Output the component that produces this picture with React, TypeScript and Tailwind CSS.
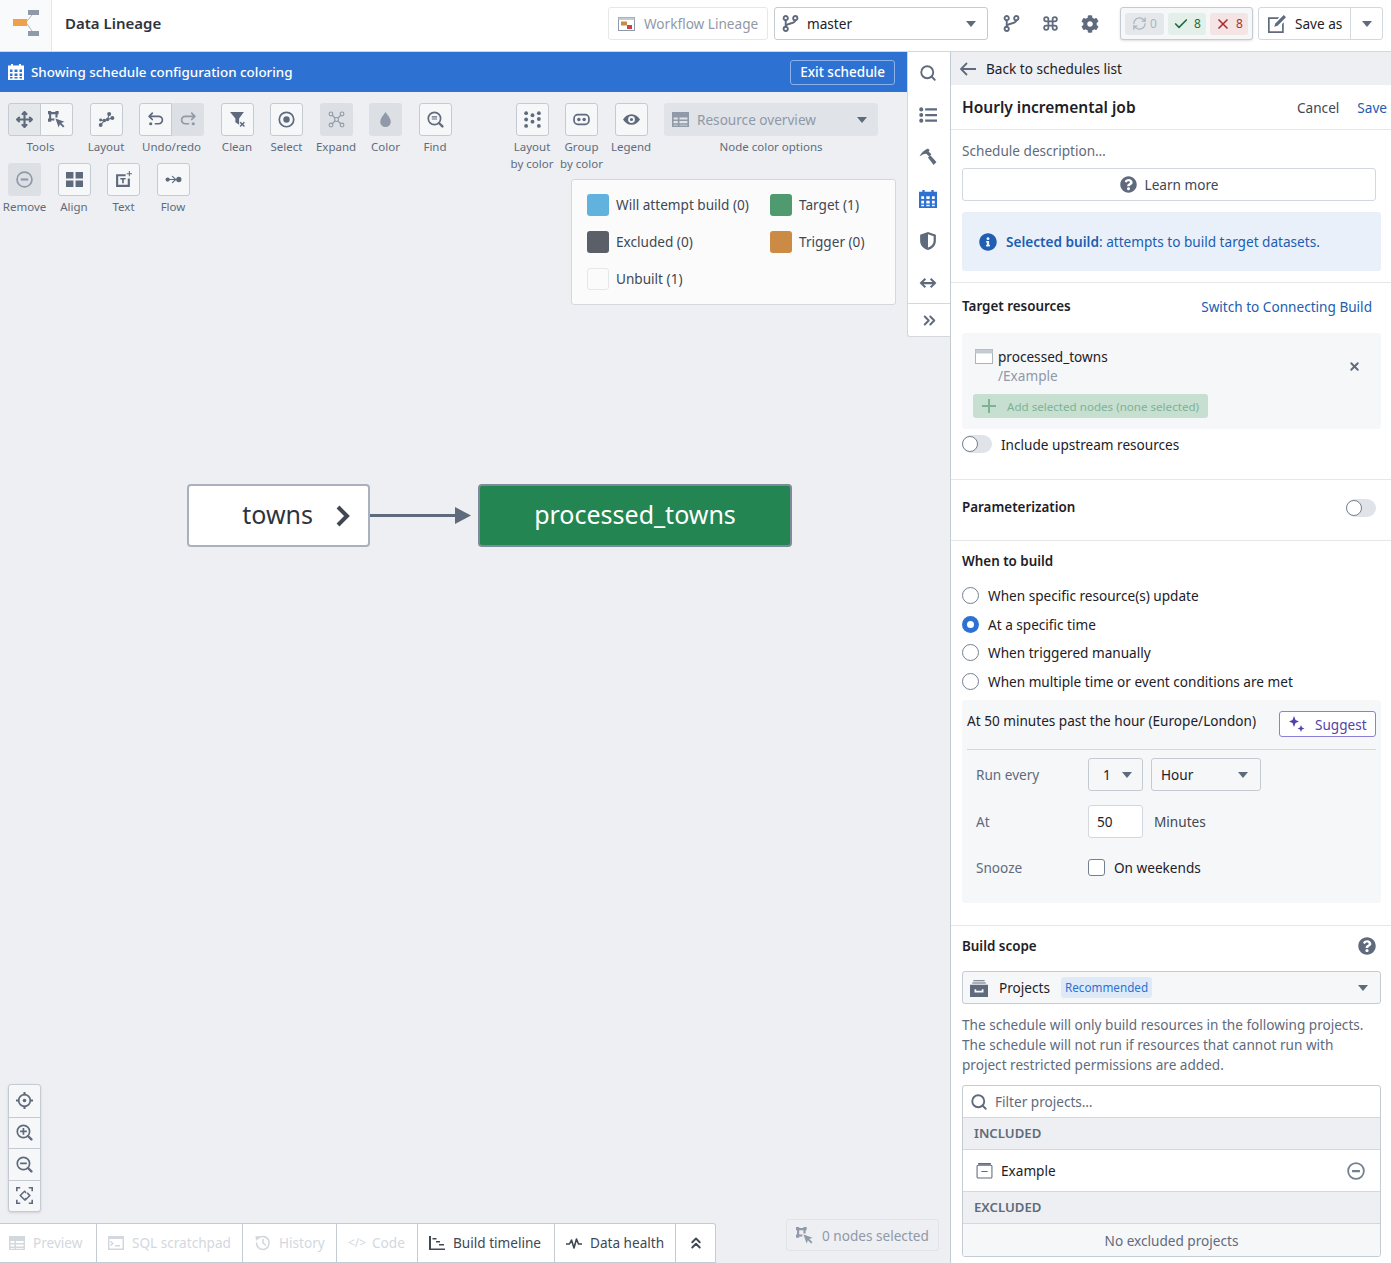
import type { ReactNode } from "react";
import { Check, ChevronsRight, ChevronsUp, Command, RefreshCw, Search, X } from "lucide-react";
import { FaCog, FaInfoCircle, FaQuestionCircle } from "react-icons/fa";

const Glyph = ({ size = 16, className = "", children }: { size?: number; className?: string; children: ReactNode }) => (
  <svg width={size} height={size} viewBox="0 0 16 16" fill="currentColor" className={"shrink-0 " + className}>
    {children}
  </svg>
);

const line = { fill: "none", stroke: "currentColor", strokeWidth: 1.6, strokeLinecap: "round", strokeLinejoin: "round" } as const;

const icons: Record<string, ReactNode> = {
  move: <path d="M15.7 7.3l-2-2a1 1 0 00-1.4 1.4l.3.3H9V3.4l.3.3a1 1 0 001.4-1.4l-2-2a1 1 0 00-1.4 0l-2 2a1 1 0 001.4 1.4l.3-.3V7H3.4l.3-.3a1 1 0 00-1.4-1.4l-2 2a1 1 0 000 1.4l2 2a1 1 0 001.4-1.4L3.4 9H7v3.6l-.3-.3a1 1 0 00-1.4 1.4l2 2a1 1 0 001.4 0l2-2a1 1 0 00-1.4-1.4l-.3.3V9h3.6l-.3.3a1 1 0 001.4 1.4l2-2a1 1 0 000-1.4z" />,
  select: <><path d="M0 0h3v1h4V0h3v3H9v3H7V3H3v4h3v2H3v1H0V7h1V3H0z" /><path d="M7 7l8.500 3-3 1.300 3 3-1.300 1.200-3-3L10 15.500z" /></>,
  layout: <><g {...line} strokeWidth={1}><path d="M2.500 13L6 9l3-1 4-1.500M9 8L10.500 3M2.500 8.500L6 9" /></g><circle cx="2.500" cy="13.200" r="1.800" /><circle cx="2.500" cy="8.500" r="1.400" /><circle cx="6" cy="9" r="1.700" /><circle cx="10.500" cy="2.800" r="1.900" /><circle cx="13.500" cy="6.500" r="1.900" /><circle cx="9" cy="8" r="1.600" /></>,
  undo: <><path {...line} d="M5 2L2 5l3 3M2.500 5H11a3.500 3.500 0 010 7H8" /><circle cx="3.500" cy="12" r="1.500" /></>,
  redo: <><path {...line} d="M11 2l3 3-3 3M13.500 5H5a3.500 3.500 0 000 7h3" /><circle cx="12.500" cy="12" r="1.500" /></>,
  clean: <><path d="M1 1h13L9.500 7v6L6 10.500V7z" /><path d="M11 10l1.500 1.500L14 10l1 1-1.500 1.500L15 14l-1 1-1.500-1.500L11 15l-1-1 1.500-1.500L10 11z" /></>,
  target: <><circle cx="8" cy="8" r="6.800" {...line} /><circle cx="8" cy="8" r="3" /></>,
  expand: <><g {...line} strokeWidth={1}><path d="M4 4l8 8M12 4l-8 8" /><circle cx="8" cy="8" r="1.800" fill="#dce0e5" /><circle cx="2.800" cy="2.800" r="1.800" /><circle cx="13.200" cy="2.800" r="1.800" /><circle cx="2.800" cy="13.200" r="1.800" /><circle cx="13.200" cy="13.200" r="1.800" /></g></>,
  drop: <path d="M8 1c2 3 5 6 5 9a5 5 0 01-10 0c0-3 3-6 5-9z" />,
  find: <><circle cx="7" cy="7" r="5.800" {...line} /><path {...line} d="M11.500 11.500l3 3" strokeWidth={2.200} /><path d="M4.500 5h5v1h-5zM4.500 7h5v1h-5z" /></>,
  minusCircle: <><circle cx="8" cy="8" r="7" {...line} /><path d="M4.500 7h7v2h-7z" /></>,
  align: <path d="M0 1h7v6H0zM9 1h7v6H9zM0 9h7v6H0zM9 9h7v6H9z" />,
  text: <><path d="M1 3h9v2H3v8h9V7h2v8H1z" /><path d="M5 6.500h5V8H8.300v3.500H6.700V8H5zM13 0h1v2h2v1h-2v2h-1V3h-2V2h2z" /></>,
  flow: <><circle cx="2.500" cy="8" r="2" /><circle cx="13" cy="8" r="2.500" /><path {...line} strokeWidth={1} d="M3 8h9M7 5l3 3-3 3" /></>,
  dots: <><circle cx="2" cy="2" r="1.800" /><circle cx="2" cy="8" r="1.800" /><circle cx="2" cy="14" r="1.800" /><circle cx="8" cy="4" r="1.800" /><circle cx="8" cy="10" r="1.800" /><circle cx="14" cy="2" r="1.800" /><circle cx="14" cy="7.500" r="1.800" /><circle cx="14" cy="14" r="1.800" /></>,
  group: <><rect x="1" y="3.500" width="14" height="9" rx="3.500" {...line} /><circle cx="5.500" cy="8" r="1.600" /><circle cx="10.500" cy="8" r="1.600" /></>,
  eye: <path fillRule="evenodd" d="M8 3c3.500 0 6.300 2.200 8 5-1.700 2.800-4.500 5-8 5s-6.300-2.200-8-5c1.700-2.800 4.500-5 8-5zm0 1.800a3.200 3.200 0 100 6.400 3.200 3.200 0 000-6.400zM8 6.500a1.500 1.500 0 110 3 1.500 1.500 0 010-3z" />,
  table: <path fillRule="evenodd" d="M0 1h16v14H0zm1.500 5v2h4V6zm5.500 0v2h7.500V6zM1.500 9.500v2h4v-2zm5.500 0v2h7.500v-2zm-5.500 3.500v.7h4V13zm5.500 0v.7h7.500V13z" />,
  edit: <><path d="M0 2h10L8.500 3.500H1.500v11h11V8L14 6.500V16H0z" /><path d="M14 0l2 2-7.500 7.500-3 1 1-3z" /></>,
  hammer: <><path d="M.5 7.500C2 4 5 1.500 8 .5L9.500 2l-1 1 2.500 2.500-2 2L6.500 5C4 5 2.500 6 .5 7.500z" /><path d="M8 8.500l2-2 5.500 6-2.500 2.500z" /></>,
  calendar: <path fillRule="evenodd" d="M3 0h2v1.500h6V0h2v1.500h3V16H0V1.500h3zM2 5.500V8h2.500V5.500zm4.500 0V8h3V5.500zm5 0V8H14V5.500zM2 9.500V12h2.500V9.500zm4.500 0V12h3V9.500zm5 0V12H14V9.500zM2 13v1.500h2.500V13zm4.500 0v1.500h3V13zm5 0v1.500H14V13z" />,
  shield: <path fillRule="evenodd" d="M8 0l7 2.500V8c0 4-3 6.800-7 8-4-1.200-7-4-7-8V2.500zm0 2v11.800c3-1.100 5-3.200 5-5.800V3.800z" />,
  arrows: <path d="M5 3.500L.5 8 5 12.500l1.300-1.300L4 9h8l-2.300 2.200 1.300 1.300L15.500 8 11 3.500 9.700 4.800 12 7H4l2.300-2.200z" />,
  list: <><circle cx="2" cy="3" r="1.800" /><circle cx="2" cy="8" r="1.800" /><circle cx="2" cy="13" r="1.800" /><path d="M5.500 2h10.500v2H5.500zM5.500 7h10.500v2H5.500zM5.500 12h10.500v2H5.500z" /></>,
  locate: <><circle cx="8" cy="8" r="5.500" {...line} /><circle cx="8" cy="8" r="1.700" /><path d="M7 0h2v3H7zM7 13h2v3H7zM0 7h3v2H0zM13 7h3v2h-3z" /></>,
  zoomIn: <><circle cx="7" cy="7" r="5.800" {...line} /><path {...line} d="M11.500 11.500l3 3" strokeWidth={2.200} /><path d="M6.200 3.800h1.600v2.400h2.400v1.600H7.800v2.400H6.200V7.800H3.800V6.200h2.400z" /></>,
  zoomOut: <><circle cx="7" cy="7" r="5.800" {...line} /><path {...line} d="M11.500 11.500l3 3" strokeWidth={2.200} /><path d="M3.800 6.200h6.400v1.600H3.800z" /></>,
  fit: <path d="M0 0h4v1.500H1.500V4H0zM12 0h4v4h-1.500V1.500H12zM0 12h1.500v2.500H4V16H0zM14.500 12H16v4h-4v-1.500h2.500zM8 3l2 2-1 1-1-1-3 3 3 3 1-1 1 1-2 2-5-5zM11 5l3 3-5 5-1-1 4-4-2-2z" />,
  timeline: <path d="M0 1h2v12.500h14V15H0zM3.500 3h4v1.500h-4zM7 6h4v1.500H7zM10 9h5v1.500h-5z" />,
  pulse: <path {...line} d="M.5 9h3l2-4 2.500 8 2.500-9 2 5h3" />,
  history: <><path {...line} d="M3 3.500A6.500 6.500 0 118 14.500 6.500 6.500 0 011.500 8" /><path d="M.5 1l5 .5L1 6z" /><path {...line} d="M8 4.500V8l2.500 2" /></>,
  sql: <path fillRule="evenodd" d="M0 1h16v14H0zm1.500 3v9.500h13V4zM3 6l3 2.500L3 11l-1-1 2-1.500L2 7zM7 10h5v1.500H7z" />,
  project: <><path d="M3 1h10v1H3zM2 3h12v1H2z" /><path fillRule="evenodd" d="M0 5h16v11H0zm4 4v3h8V9h-1.500v1.500h-5V9z" /></>,
  projectOutline: <><path d="M2 1h12v1.500H2z" /><rect x="1" y="3" width="14" height="12" rx="1" {...line} strokeWidth={1} /><path d="M5 8.500h6v1H5z" /></>,
  branch: <><g {...line} strokeWidth={1.800}><circle cx="3.500" cy="3" r="2" /><circle cx="12.500" cy="3" r="2" /><circle cx="3.500" cy="13" r="2" /><path d="M3.500 5v6M12.500 5c0 4-9 2-9 6" /></g></>,
};

const Icon = ({ name, size = 16, className = "" }: { name: string; size?: number; className?: string }) => (
  <Glyph size={size} className={className}>{icons[name]}</Glyph>
);

const Caret = ({ className = "" }: { className?: string }) => (
  <svg width="10" height="6" viewBox="0 0 10 6" fill="currentColor" className={"shrink-0 text-[#5f6b7c] " + className}>
    <path d="M0 0h10L5 6z" />
  </svg>
);

const ToolButton = ({ icon, off, active, className = "w-[33px]" }: { icon: string; off?: boolean; active?: boolean; className?: string }) => (
  <div
    className={
      "flex h-[33px] items-center justify-center rounded-[3px] " +
      (off
        ? "bg-[#dce0e5] text-[#8f99a8] "
        : active
          ? "border border-[#c5cbd3] bg-[#e5e8eb] text-[#5f6b7c] "
          : "border border-[#c5cbd3] bg-[#f6f7f9] text-[#5f6b7c] ") +
      className
    }
  >
    <Icon name={icon} size={17} />
  </div>
);

const ToolLabel = ({ children }: { children: ReactNode }) => (
  <div className="mt-[2px] whitespace-nowrap text-center text-[11.5px] leading-[17px] text-[#5f6b7c]">{children}</div>
);

const Tool = ({ icon, label, off }: { icon: string; label: ReactNode; off?: boolean }) => (
  <div className="flex w-[33px] flex-col items-center">
    <ToolButton icon={icon} off={off} />
    <ToolLabel>{label}</ToolLabel>
  </div>
);

const Toolbar = () => (
  <div className="absolute left-[8px] right-[29px] top-[11px] flex justify-between">
    <div className="flex w-[460px] flex-wrap gap-x-[16.5px] gap-y-[8px]">
      <div className="flex flex-col items-center">
        <div className="flex">
          <ToolButton icon="move" active className="w-[33px] rounded-r-none" />
          <ToolButton icon="select" className="w-[32px] rounded-l-none border-l-0" />
        </div>
        <ToolLabel>Tools</ToolLabel>
      </div>
      <Tool icon="layout" label="Layout" />
      <div className="flex flex-col items-center">
        <div className="flex">
          <ToolButton icon="undo" className="w-[33px] rounded-r-none" />
          <ToolButton icon="redo" off className="w-[32px] rounded-l-none" />
        </div>
        <ToolLabel>Undo/redo</ToolLabel>
      </div>
      <Tool icon="clean" label="Clean" />
      <Tool icon="target" label="Select" />
      <Tool icon="expand" label="Expand" off />
      <Tool icon="drop" label="Color" off />
      <Tool icon="find" label="Find" />
      <Tool icon="minusCircle" label="Remove" off />
      <Tool icon="align" label="Align" />
      <Tool icon="text" label="Text" />
      <Tool icon="flow" label="Flow" />
    </div>
    <div className="flex gap-x-[16.5px]">
      <Tool icon="dots" label={<>Layout<br />by color</>} />
      <Tool icon="group" label={<>Group<br />by color</>} />
      <Tool icon="eye" label="Legend" />
      <div className="flex w-[214px] flex-col items-center">
        <div className="flex h-[33px] w-full items-center rounded-[3px] bg-[#e0e3e8] pl-[8px] pr-[11px] text-[13.6px] text-[#8f99a8]">
          <Icon name="table" size={17} className="mr-[8px]" />
          <span className="flex-1">Resource overview</span>
          <Caret />
        </div>
        <ToolLabel>Node color options</ToolLabel>
      </div>
    </div>
  </div>
);

const Swatch = ({ color, label }: { color: string; label: string }) => (
  <div className="flex h-[22px] items-center gap-[7px] text-[13.6px] text-[#404854]">
    <span className={"h-[22px] w-[22px] rounded-[3px] " + color} />
    <span className="mb-[1px]">{label}</span>
  </div>
);

const Legend = () => (
  <div className="absolute left-[571px] top-[87px] grid h-[126px] w-[325px] grid-cols-[183px_1fr] content-start gap-y-[15px] rounded-[3px] border border-[#d3d8de] bg-[#fbfbfc] pl-[15px] pt-[14px]">
    <Swatch color="bg-[#62b2de]" label="Will attempt build (0)" />
    <Swatch color="bg-[#4f9b6f]" label="Target (1)" />
    <Swatch color="bg-[#5a5f68]" label="Excluded (0)" />
    <Swatch color="bg-[#cc8b45]" label="Trigger (0)" />
    <Swatch color="border border-[#e5e8eb] bg-[#fbfbfc]" label="Unbuilt (1)" />
  </div>
);

const Graph = () => (
  <>
    <div className="absolute left-[187px] top-[392px] flex h-[63px] w-[183px] items-center justify-end rounded-[4px] border-2 border-[#a9b1be] bg-white pb-[3px] pr-[17px] text-[25px] leading-[38px] text-[#2f343c]">
      towns
      <svg width="16" height="22" viewBox="0 0 16 22" className="ml-[22px] mt-[3px]" fill="none" stroke="#404854" strokeWidth="4">
        <path d="M3 2l9 9-9 9" />
      </svg>
    </div>
    <div className="absolute left-[370px] top-[415px] flex items-center text-[#5f6b7c]">
      <div className="h-[3px] w-[85px] bg-[#5f6b7c]" />
      <svg width="16" height="17" viewBox="0 0 16 17" fill="currentColor"><path d="M0 0l16 8.500L0 17z" /></svg>
    </div>
    <div className="absolute left-[478px] top-[392px] flex h-[63px] w-[314px] items-center justify-center rounded-[4px] border-2 border-[#7d8a99] bg-[#238551] pb-[3px] text-[25px] leading-[38px] text-white">
      processed_towns
    </div>
  </>
);

const ZoomControls = () => (
  <div className="absolute left-[8px] top-[992px] flex w-[33px] flex-col overflow-hidden rounded-[3px] border border-[#c5cbd3] bg-[#f6f7f9] text-[#5f6b7c] shadow-sm">
    {["locate", "zoomIn", "zoomOut", "fit"].map((name, i) => (
      <div key={name} className={"flex h-[31.5px] items-center justify-center " + (i ? "border-t border-[#c5cbd3]" : "")}>
        <Icon name={name} size={17} />
      </div>
    ))}
  </div>
);

const Tab = ({ icon, label, off, width }: { icon: ReactNode; label: string; off?: boolean; width: string }) => (
  <div className={"flex h-full items-center gap-[8px] whitespace-nowrap border-r border-[#c5cbd3] pb-[1px] text-[13.6px] " + width + (off ? " text-[#d3d8de]" : " text-[#404854]")}>
    {icon}
    {label}
  </div>
);

const BottomTabs = () => (
  <div className="absolute bottom-0 left-0 flex h-[40px] w-[716px] rounded-tr-[3px] border-y border-r border-[#c5cbd3] bg-white">
    <Tab icon={<Icon name="table" />} label="Preview" off width="w-[97px] pl-[9px]" />
    <Tab icon={<Icon name="sql" />} label="SQL scratchpad" off width="w-[146px] pl-[11px]" />
    <Tab icon={<Icon name="history" />} label="History" off width="w-[94px] pl-[12px]" />
    <Tab icon={<span className="w-[16px] text-[12px]">&lt;/&gt;</span>} label="Code" off width="w-[81px] pl-[11px]" />
    <Tab icon={<Icon name="timeline" />} label="Build timeline" width="w-[137px] pl-[11px]" />
    <Tab icon={<Icon name="pulse" />} label="Data health" width="w-[121px] pl-[11px]" />
    <div className="flex flex-1 items-center justify-center text-[#404854]">
      <ChevronsUp size={18} strokeWidth={2.500} />
    </div>
  </div>
);

const TopBar = () => (
  <header className="flex h-[52px] shrink-0 items-start border-b border-[#d3d8de] bg-white">
    <div className="flex h-[51px] w-[52px] items-center justify-center border-r border-[#e5e8eb] bg-[#f9fafb] pb-[5px]">
      <svg width="26" height="26" viewBox="0 0 26 26">
        <path d="M14 11L19 5M14 14l5 7" stroke="#abb3bf" fill="none" />
        <rect x="0" y="9" width="14" height="7" fill="#f0a04b" />
        <rect x="15" y="0" width="11" height="5" fill="#8f99a8" />
        <rect x="15" y="21" width="11" height="5" fill="#8f99a8" />
      </svg>
    </div>
    <div className="flex h-[47px] flex-1 items-center">
      <div className="mb-[1px] ml-[13px] flex-1 text-[15px] font-semibold text-[#2f343c]">Data Lineage</div>
      <div className="flex h-[33px] w-[160px] items-center rounded-[3px] border border-[#e5e8eb] pl-[9px] text-[13.6px] text-[#8f99a8]">
        <svg width="17" height="14" viewBox="0 0 17 14" className="mr-[9px]">
          <rect x=".5" y=".5" width="16" height="13" fill="#fff" stroke="#8f99a8" />
          <rect x=".5" y=".5" width="16" height="2.500" fill="#c5cbd3" />
          <rect x="3" y="4.500" width="6" height="4" fill="#cc8b45" />
          <rect x="9" y="8" width="5" height="4" fill="#cd4246" />
        </svg>
        Workflow Lineage
      </div>
      <div className="ml-[6px] flex h-[33px] w-[214px] items-center rounded-[3px] border border-[#c5cbd3] bg-white pl-[7px] pr-[11px] text-[13.6px] text-[#1c2127]">
        <Icon name="branch" size={17} className="mr-[8px] text-[#5f6b7c]" />
        <span className="flex-1">master</span>
        <Caret />
      </div>
      <div className="ml-[15px] flex w-[100px] items-center gap-[22px] text-[#5f6b7c]">
        <Icon name="branch" size={17} />
        <Command size={17} strokeWidth={2.500} />
        <FaCog size={18} />
      </div>
      <div className="ml-[17px] flex h-[33px] w-[133px] items-center gap-[4px] rounded-[3px] border border-[#c5cbd3] bg-[#f6f7f9] px-[4px] text-[12px] shadow-sm">
        <span className="flex h-[22px] w-[39px] items-center justify-center gap-[3px] rounded-[3px] bg-[#e5e8eb] text-[#abb3bf]">
          <RefreshCw size={15} strokeWidth={2} />0
        </span>
        <span className="flex h-[22px] w-[38px] items-center justify-center gap-[5px] rounded-[3px] bg-[#e3efe8] text-[#1c6e42]">
          <Check size={16} strokeWidth={2.500} />8
        </span>
        <span className="flex h-[22px] w-[38px] items-center justify-center gap-[5px] rounded-[3px] bg-[#f5e4e4] text-[#ac2f33]">
          <X size={16} strokeWidth={2.500} />8
        </span>
      </div>
      <div className="ml-[5px] mr-[8px] flex h-[33px] w-[125px] items-center rounded-[3px] border border-[#d3d8de] text-[13.6px] text-[#1c2127]">
        <Icon name="edit" size={18} className="ml-[9px] mr-[9px] text-[#5f6b7c]" />
        <span className="flex-1">Save as</span>
        <div className="flex h-full w-[32px] items-center justify-center border-l border-[#d3d8de]"><Caret /></div>
      </div>
    </div>
  </header>
);

const SideRail = () => (
  <div className="flex h-[285px] w-[43px] shrink-0 flex-col rounded-bl-[3px] border-b border-l border-[#d3d8de] bg-white pr-[2px] text-[#5f6b7c]">
    <div className="flex h-[251px] flex-col items-center gap-[24px] pt-[12px]">
      <Search size={18} strokeWidth={2.500} />
      <Icon name="list" size={18} />
      <Icon name="hammer" size={18} />
      <Icon name="calendar" size={18} className="text-[#2d72d2]" />
      <Icon name="shield" size={18} />
      <Icon name="arrows" size={18} />
    </div>
    <div className="-mr-[2px] flex flex-1 items-center justify-center border-t border-[#d3d8de]">
      <ChevronsRight size={19} strokeWidth={2.500} />
    </div>
  </div>
);

const Canvas = () => (
  <div className="relative flex h-full w-[951px] shrink-0 border-r border-[#c5cbd3] bg-[#edeff2]">
    <div className="flex w-[907px] shrink-0 flex-col">
      <div className="flex h-[40px] items-center bg-[#2d72d2] pl-[8px] pr-[12px] text-white">
        <Icon name="calendar" />
        <span className="ml-[7px] flex-1 text-[13.4px] font-medium">Showing schedule configuration coloring</span>
        <div className="flex h-[25px] items-center rounded-[3px] border border-[#8ab1e8] px-[9px] text-[13.5px] font-medium">Exit schedule</div>
      </div>
      <div className="relative flex-1">
        <Toolbar />
        <Legend />
        <Graph />
        <ZoomControls />
        <BottomTabs />
      </div>
    </div>
    <SideRail />
    <div className="absolute bottom-[12px] left-[786px] flex h-[32px] w-[153px] items-center rounded-[3px] border border-[#e0e3e8] pl-[9px] text-[13.6px] text-[#8f99a8]">
      <Icon name="select" size={17} className="mr-[9px]" />
      0 nodes selected
    </div>
  </div>
);

const Toggle = () => (
  <span className="flex h-[18px] w-[30px] shrink-0 items-center rounded-full bg-[#e0e3e8]">
    <span className="h-[16px] w-[16px] rounded-full border border-[#738091] bg-white" />
  </span>
);

const Radio = ({ label, on }: { label: string; on?: boolean }) => (
  <div className="flex h-[17px] items-center gap-[9px] text-[13.6px] text-[#1c2127]">
    {on ? (
      <span className="flex h-[17px] w-[17px] items-center justify-center rounded-full bg-[#2d72d2]">
        <span className="h-[7px] w-[7px] rounded-full bg-white" />
      </span>
    ) : (
      <span className="h-[17px] w-[17px] rounded-full border border-[#738091] bg-white" />
    )}
    {label}
  </div>
);

const FormRow = ({ label, children, height }: { label: string; children: ReactNode; height: string }) => (
  <div className={"flex items-center " + height}>
    <span className="w-[121px] pl-[9px] text-[#5f6b7c]">{label}</span>
    {children}
  </div>
);

const SchedulePanel = () => (
  <aside className="flex h-full min-w-0 flex-1 flex-col overflow-hidden bg-white text-[13.6px] text-[#1c2127]">
    <div className="flex h-[33px] shrink-0 items-center bg-[#edeff2] pl-[9px]">
      <svg width="16" height="14" viewBox="0 0 16 14" fill="none" stroke="#5f6b7c" strokeWidth="1.800" className="mr-[10px]">
        <path d="M7 1L1 7l6 6M1 7h15" />
      </svg>
      Back to schedules list
    </div>
    <div className="flex h-[45px] shrink-0 items-center border-b border-[#e5e8eb] pl-[11px] pr-[4px]">
      <span className="flex-1 text-[15.5px] font-semibold">Hourly incremental job</span>
      <span className="mr-[18px] text-[#404854]">Cancel</span>
      <span className="text-[#215db0]">Save</span>
    </div>
    <div className="shrink-0 border-b border-[#e5e8eb] pb-[11px] pl-[11px] pr-[10px] pt-[10px]">
      <div className="h-[20px] text-[#5f6b7c]">Schedule description…</div>
      <div className="mr-[5px] mt-[8px] flex h-[33px] items-center justify-center gap-[8px] rounded-[3px] border border-[#d3d8de] text-[#404854]">
        <FaQuestionCircle size={17} className="text-[#5f6b7c]" />
        Learn more
      </div>
      <div className="mt-[11px] flex h-[59px] items-center gap-[9px] rounded-[3px] bg-[#e9f0fa] pl-[17px] text-[#215db0]">
        <FaInfoCircle size={18} />
        <span><b className="font-semibold">Selected build</b>: attempts to build target datasets.</span>
      </div>
    </div>
    <div className="h-[197px] shrink-0 border-b border-[#e5e8eb] pl-[11px] pr-[10px] pt-[13px]">
      <div className="flex h-[20px] items-center justify-between pr-[9px]">
        <span className="text-[13.4px] font-semibold">Target resources</span>
        <span className="text-[#215db0]">Switch to Connecting Build</span>
      </div>
      <div className="mt-[17px] h-[96px] rounded-[3px] bg-[#f6f7f9] pl-[13px] pr-[11px] pt-[14px]">
        <div className="flex items-start">
          <svg width="18" height="15" viewBox="0 0 18 15" className="mr-[5px] mt-[2px]">
            <rect x=".5" y=".5" width="17" height="14" fill="#fff" stroke="#abb3bf" />
            <rect x=".5" y=".5" width="17" height="4" fill="#c5cbd3" />
          </svg>
          <div className="flex-1 leading-[19px]">
            processed_towns
            <div className="text-[#8f99a8]">/Example</div>
          </div>
          <X size={13} strokeWidth={3.500} className="mr-[9px] mt-[13px] text-[#5f6b7c]" />
        </div>
        <div className="-ml-[2px] mt-[9px] flex h-[24px] w-[235px] items-center rounded-[3px] bg-[#c6dfd0] pl-[9px] text-[11.6px] text-[#7fb295]">
          <svg width="14" height="14" viewBox="0 0 14 14" fill="currentColor" className="mr-[11px]"><path d="M6 0h2v6h6v2H8v6H6V8H0V6h6z" /></svg>
          Add selected nodes (none selected)
        </div>
      </div>
      <div className="mt-[6px] flex h-[18px] items-center gap-[9px]">
        <Toggle />
        Include upstream resources
      </div>
    </div>
    <div className="flex h-[61px] shrink-0 items-center justify-between border-b border-[#e5e8eb] pb-[5px] pl-[11px] pr-[15px]">
      <span className="text-[13.4px] font-semibold">Parameterization</span>
      <Toggle />
    </div>
    <div className="h-[385px] shrink-0 border-b border-[#e5e8eb] pl-[11px] pr-[10px] pt-[10px]">
      <div className="h-[20px] text-[13.4px] font-semibold">When to build</div>
      <div className="mt-[16px] flex flex-col gap-[11.7px]">
        <Radio label="When specific resource(s) update" />
        <Radio label="At a specific time" on />
        <Radio label="When triggered manually" />
        <Radio label="When multiple time or event conditions are met" />
      </div>
      <div className="mt-[10px] h-[203px] rounded-[3px] bg-[#f6f7f9] px-[5px] pt-[11px]">
        <div className="flex h-[39px] items-start justify-between border-b border-[#d3d8de]">
          <span className="leading-[20px]">At 50 minutes past the hour (Europe/London)</span>
          <div className="flex h-[26px] w-[97px] items-center rounded-[3px] border border-[#8e7fd6] bg-white pl-[8px] text-[#5642a6]">
            <svg width="18" height="18" viewBox="0 0 18 18" fill="#5642a6" className="mr-[9px]">
              <path d="M6 1l1.500 4L11 6.500 7.500 8 6 12 4.500 8 1 6.500 4.500 5zM13 10l1 2.500 2.500 1-2.500 1L13 17l-1-2.500-2.500-1 2.500-1z" />
            </svg>
            Suggest
          </div>
        </div>
        <div className="mt-[8px] flex flex-col">
          <FormRow label="Run every" height="h-[33px]">
            <div className="flex h-[33px] w-[55px] items-center justify-between rounded-[3px] border border-[#c5cbd3] bg-[#f6f7f9] pl-[14px] pr-[10px]">1<Caret /></div>
            <div className="ml-[8px] flex h-[33px] w-[110px] items-center justify-between rounded-[3px] border border-[#c5cbd3] bg-[#f6f7f9] pl-[9px] pr-[12px]">Hour<Caret /></div>
          </FormRow>
          <FormRow label="At" height="mt-[14px] h-[33px]">
            <div className="flex h-[33px] w-[55px] items-center rounded-[3px] border border-[#d3d8de] bg-white pl-[8px]">50</div>
            <span className="ml-[11px] text-[#404854]">Minutes</span>
          </FormRow>
          <FormRow label="Snooze" height="mt-[13px] h-[33px]">
            <span className="mr-[9px] h-[17px] w-[17px] rounded-[3px] border border-[#738091] bg-white" />
            On weekends
          </FormRow>
        </div>
      </div>
    </div>
    <div className="pl-[11px] pr-[10px] pt-[10px]">
      <div className="flex h-[20px] items-center justify-between pr-[5px]">
        <span className="text-[13.4px] font-semibold">Build scope</span>
        <FaQuestionCircle size={18} className="text-[#5f6b7c]" />
      </div>
      <div className="mt-[15px] flex h-[33px] items-center rounded-[3px] border border-[#c5cbd3] bg-[#f6f7f9] pl-[7px] pr-[12px]">
        <Icon name="project" size={18} className="mr-[11px] text-[#5f6b7c]" />
        <span className="mr-[11px]">Projects</span>
        <span className="rounded-[3px] bg-[#dfeaf8] px-[4px] text-[11.7px] text-[#2d72d2]">Recommended</span>
        <span className="flex-1" />
        <Caret />
      </div>
      <p className="mt-[11px] leading-[20px] text-[#5f6b7c]">
        The schedule will only build resources in the following projects. The schedule will not run if resources that cannot run with project restricted permissions are added.
      </p>
      <div className="mt-[10px] overflow-hidden rounded-[3px] border border-[#c5cbd3]">
        <div className="flex h-[31px] items-center pl-[7px] text-[#5f6b7c]">
          <Search size={18} strokeWidth={2.500} className="mr-[7px]" />
          Filter projects…
        </div>
        <div className="flex h-[33px] items-center border-y border-[#d3d8de] bg-[#edeff2] pl-[11px] text-[13.2px] font-semibold text-[#5f6b7c]">INCLUDED</div>
        <div className="flex h-[41px] items-center pl-[13px] pr-[15px]">
          <Icon name="projectOutline" size={17} className="mr-[8px] text-[#5f6b7c]" />
          <span className="flex-1">Example</span>
          <Icon name="minusCircle" size={18} className="text-[#738091]" />
        </div>
        <div className="flex h-[33px] items-center border-y border-[#d3d8de] bg-[#edeff2] pl-[11px] text-[13.2px] font-semibold text-[#5f6b7c]">EXCLUDED</div>
        <div className="flex h-[32px] items-center justify-center bg-[#f6f7f9] text-[#5f6b7c]">No excluded projects</div>
      </div>
    </div>
  </aside>
);

export default function App() {
  return (
    <div className="flex h-[1263px] w-[1391px] flex-col overflow-hidden bg-white font-['Noto_Sans',sans-serif] leading-[21px]">
      <TopBar />
      <div className="flex min-h-0 flex-1">
        <Canvas />
        <SchedulePanel />
      </div>
    </div>
  );
}
